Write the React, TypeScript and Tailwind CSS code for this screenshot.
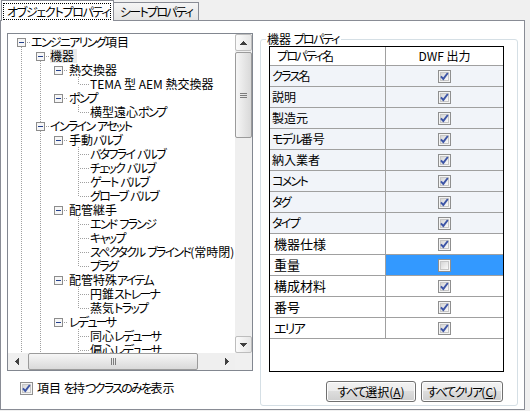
import type { ReactNode } from 'react';

type Kind = 'root' | 'l1' | 'l2' | 'leaf';
type TreeRow = { label: string; kind: Kind; pos?: 'first' | 'mid' | 'last' | 'only'; sel?: boolean };

const TREE: TreeRow[] = [
  { label: 'エンジニアリング項目', kind: 'root' },
  { label: '機器', kind: 'l1', sel: true },
  { label: '熱交換器', kind: 'l2' },
  { label: 'TEMA 型 AEM 熱交換器', kind: 'leaf', pos: 'only' },
  { label: 'ポンプ', kind: 'l2' },
  { label: '横型遠心ポンプ', kind: 'leaf', pos: 'only' },
  { label: 'インライン アセット', kind: 'l1' },
  { label: '手動バルブ', kind: 'l2' },
  { label: 'バタフライ バルブ', kind: 'leaf', pos: 'first' },
  { label: 'チェック バルブ', kind: 'leaf', pos: 'mid' },
  { label: 'ゲート バルブ', kind: 'leaf', pos: 'mid' },
  { label: 'グローブ バルブ', kind: 'leaf', pos: 'last' },
  { label: '配管継手', kind: 'l2' },
  { label: 'エンド フランジ', kind: 'leaf', pos: 'first' },
  { label: 'キャップ', kind: 'leaf', pos: 'mid' },
  { label: 'スペクタクル ブラインド(常時閉)', kind: 'leaf', pos: 'mid' },
  { label: 'プラグ', kind: 'leaf', pos: 'last' },
  { label: '配管特殊アイテム', kind: 'l2' },
  { label: '円錐ストレーナ', kind: 'leaf', pos: 'first' },
  { label: '蒸気トラップ', kind: 'leaf', pos: 'last' },
  { label: 'レデューサ', kind: 'l2' },
  { label: '同心レデューサ', kind: 'leaf', pos: 'first' },
  { label: '偏心レデューサ', kind: 'leaf', pos: 'mid' },
];

// text start (px from the tree's inner left edge)
const INDENT: Record<Kind, number> = { root: 23, l1: 42, l2: 61, leaf: 82 };
const BOX_X: Partial<Record<Kind, number>> = { root: 13.5, l1: 32.5, l2: 50.5 };

const PROPS = [
  { name: 'クラス名', on: true, tint: true },
  { name: '説明', on: true, tint: true },
  { name: '製造元', on: true, tint: true },
  { name: 'モデル番号', on: true, tint: true },
  { name: '納入業者', on: true, tint: true },
  { name: 'コメント', on: true, tint: true },
  { name: 'タグ', on: true, tint: true },
  { name: 'タイプ', on: true, tint: true },
  { name: '機器仕様', on: true, tint: false },
  { name: '重量', on: false, tint: false, sel: true },
  { name: '構成材料', on: true, tint: false },
  { name: '番号', on: true, tint: false },
  { name: 'エリア', on: true, tint: false },
];

const KANA = /([\u3040-\u30ff]+)/;

// kana in the old UI font are much narrower than in Noto, so tighten kana runs only
function J({ t, cls = 'tracking-[-1.7px]' }: { t: string; cls?: string }) {
  return (
    <>
      {t.split(KANA).map((s, i) =>
        i % 2 ? (
          <span key={i} className={cls}>
            {s}
          </span>
        ) : (
          s
        ),
      )}
    </>
  );
}

const DOT = { stroke: '#a0a0a0', strokeDasharray: '1 1' };

function TreeGlyphs({ row, index }: { row: TreeRow; index: number }) {
  const w = INDENT[row.kind];
  const bx = BOX_X[row.kind];
  return (
    <svg width={w} height={14} className="shrink-0" shapeRendering="crispEdges">
      <line x1={13.5} x2={13.5} y1={index === 0 ? 12 : 0} y2={14} {...DOT} />
      {index >= 1 && w > 33 && <line x1={32.5} x2={32.5} y1={index === 1 ? 12 : 0} y2={14} {...DOT} />}
      {row.kind === 'leaf' && (
        <>
          <line
            x1={70.5}
            x2={70.5}
            y1={0}
            y2={row.pos === 'last' || row.pos === 'only' ? 8 : 14}
            {...DOT}
          />
          <line x1={72} x2={81} y1={7.5} y2={7.5} {...DOT} />
        </>
      )}
      {bx !== undefined && (
        <>
          <line x1={bx + 5.5} x2={w - 1} y1={7.5} y2={7.5} {...DOT} />
          <rect x={bx - 4} y={3.5} width={8} height={8} fill="#f6f6f6" stroke="#8d8d8d" />
          <line x1={bx - 2.5} x2={bx + 2.5} y1={7.5} y2={7.5} stroke="#23408c" />
        </>
      )}
    </svg>
  );
}

function Tri({ dir }: { dir: 'up' | 'down' | 'left' | 'right' }) {
  const vertical = dir === 'up' || dir === 'down';
  const cells: [number, number][] = [];
  for (let i = 0; i < 4; i++) for (let j = -i; j <= i; j++) cells.push([i, j]);
  return (
    <svg width={vertical ? 7 : 4} height={vertical ? 4 : 7} shapeRendering="crispEdges">
      {cells.map(([i, j], k) => {
        const x = vertical ? 3 + j : dir === 'left' ? i : 3 - i;
        const y = dir === 'up' ? i : dir === 'down' ? 3 - i : 3 + j;
        return <rect key={k} x={x} y={y} width={1} height={1} fill="#404040" />;
      })}
    </svg>
  );
}

function VScroll() {
  return (
    <div className="flex h-[319px] w-[17px] flex-col bg-[#efefef]">
      <div className="flex h-[17px] w-[17px] items-center justify-center rounded-[2px] border border-[#bdbdbd] bg-gradient-to-r from-[#fbfbfb] to-[#e6e6e6]">
        <Tri dir="up" />
      </div>
      <div className="flex-1">
        <div className="mt-[1px] flex h-[86px] w-[17px] items-center justify-center rounded-[2px] border border-[#9b9b9b] bg-gradient-to-r from-[#f6f6f6] to-[#d9d9d9]">
          <svg width="7" height="5" shapeRendering="crispEdges">
            <rect x="0" y="0" width="7" height="1" fill="#7d7d7d" />
            <rect x="0" y="2" width="7" height="1" fill="#7d7d7d" />
            <rect x="0" y="4" width="7" height="1" fill="#7d7d7d" />
          </svg>
        </div>
      </div>
      <div className="flex h-[17px] w-[17px] items-center justify-center rounded-[2px] border border-[#bdbdbd] bg-gradient-to-r from-[#fbfbfb] to-[#e6e6e6]">
        <Tri dir="down" />
      </div>
    </div>
  );
}

function HScroll() {
  return (
    <div className="flex h-[17px] w-[227px] items-center bg-[#efefef]">
      <div className="flex h-[17px] w-[17px] items-center justify-center">
        <Tri dir="left" />
      </div>
      <div className="flex h-[17px] flex-1 items-center">
        <div className="ml-[3px] flex h-[17px] w-[170px] items-center justify-center rounded-[2px] border border-[#9b9b9b] bg-gradient-to-b from-[#f6f6f6] to-[#d9d9d9]">
          <svg width="5" height="7" shapeRendering="crispEdges">
            <rect x="0" y="0" width="1" height="7" fill="#7d7d7d" />
            <rect x="2" y="0" width="1" height="7" fill="#7d7d7d" />
            <rect x="4" y="0" width="1" height="7" fill="#7d7d7d" />
          </svg>
        </div>
      </div>
      <div className="flex h-[17px] w-[17px] items-center justify-center">
        <Tri dir="right" />
      </div>
    </div>
  );
}

function CheckBox({ checked }: { checked: boolean }) {
  return (
    <span className="flex h-[13px] w-[13px] shrink-0 items-center justify-center border border-[#8f8f8f] bg-[#f4f4f4]">
      <span className="flex h-[9px] w-[9px] items-center justify-center border border-[#c6c6c6] bg-gradient-to-br from-[#d6d6d6] to-[#fafafa]">
        {checked && (
          <svg width="9" height="9" viewBox="0 0 9 9" className="shrink-0 overflow-visible">
            <path d="M0.9 4.3 L3.3 6.9 L7.8 1" fill="none" stroke="#3d55a6" strokeWidth="1.9" />
          </svg>
        )}
      </span>
    </span>
  );
}

function Button({ children, width }: { children: ReactNode; width: string }) {
  return (
    <div
      className={`flex h-[21px] ${width} items-center justify-center whitespace-nowrap rounded-[3px] border border-[#707070] bg-[linear-gradient(to_bottom,#f2f2f2_0%,#ebebeb_50%,#dddddd_50%,#cfcfcf_100%)] shadow-[inset_0_0_0_1px_#fcfcfc]`}
    >
      {children}
    </div>
  );
}

export default function App() {
  return (
    <div className="h-[411px] w-[530px] overflow-hidden bg-[#f0f0f0] font-['Noto_Sans_CJK_JP','Noto_Sans_CJK_SC',sans-serif] text-[12px] leading-[14px] text-black [font-feature-settings:'palt']">
      {/* tabs */}
      <div className="flex h-[20px] items-start">
        <div className="relative z-10 ml-[1px] h-[21px] w-[113px] shrink-0 border border-b-0 border-[#898c95] bg-white pl-[1px] pt-[2px]">
          <div className="flex h-[17px] w-[108px] items-center overflow-hidden whitespace-nowrap border border-dotted border-black pl-[3px]">
            <J t="オブジェクト プロパティ" cls="tracking-[-1.3px]" />
          </div>
        </div>
        <div className="mt-[2px] flex h-[18px] w-[85px] shrink-0 items-center overflow-hidden whitespace-nowrap border-r border-t border-[#898c95] bg-gradient-to-b from-[#f5f5f5] to-[#e4e4e4] pl-[6px]">
          <J t="シート プロパティ" />
        </div>
      </div>

      {/* tab page */}
      <div className="h-[390px] w-[525px] border border-[#898c95] bg-white">
        <div className="flex pl-[6px] pt-[12px]">
          {/* left: class tree */}
          <div className="flex flex-col">
            <div className="flex h-[338px] w-[246px] flex-col border border-[#828790] bg-white">
              <div className="flex h-[319px]">
                <div className="w-[227px] overflow-hidden pt-[1px]">
                  {TREE.map((row, i) => (
                    <div key={i} className="flex h-[14px] items-center">
                      <TreeGlyphs row={row} index={i} />
                      <span className={`whitespace-nowrap ${row.sel ? 'bg-[#ebebeb] pr-[3px]' : ''}`}>
                        <J t={row.label} />
                      </span>
                    </div>
                  ))}
                </div>
                <VScroll />
              </div>
              <div className="flex h-[17px]">
                <HScroll />
                <div className="h-[17px] w-[17px] bg-[#f0f0f0]" />
              </div>
            </div>
            <div className="ml-[13px] mt-[10px] flex items-center gap-[4px]">
              <CheckBox checked />
              <span className="whitespace-nowrap">
                <J t="項目 を持つクラスのみを表示" />
              </span>
            </div>
          </div>

          {/* right: property group */}
          <div className="relative ml-[7px] mt-[6px] h-[367px] w-[258px] rounded-[3px] border border-[#d5dfe5] pl-[8px] pt-[6px]">
            <span className="absolute -top-[8px] left-[5px] whitespace-nowrap bg-white pl-[1px] pr-[2px]">
              <J t="機器 プロパティ" />
            </span>
            <div className="h-[326px] w-[235px] border border-black bg-white">
              <div className="flex h-[19px] border-b border-[#a0a0a0]">
                <div className="flex w-[116px] items-center border-r border-[#a0a0a0] pl-[7px]">
                  <J t="プロパティ名" />
                </div>
                <div className="flex flex-1 items-center justify-center">DWF 出力</div>
              </div>
              {PROPS.map((p) => (
                <div
                  key={p.name}
                  className={`flex h-[21px] border-b border-[#a0a0a0] ${p.tint ? 'bg-[#f1f4f9]' : 'bg-white'}`}
                >
                  <div
                    className={`flex w-[116px] items-center whitespace-nowrap border-r border-[#a0a0a0] ${
                      p.tint ? 'pl-[2px]' : 'pl-[4px] text-[13px]'
                    }`}
                  >
                    <J t={p.name} />
                  </div>
                  <div className={`flex flex-1 items-center justify-center pt-[1px] ${p.sel ? 'bg-[#3399ff]' : ''}`}>
                    <CheckBox checked={p.on} />
                  </div>
                </div>
              ))}
            </div>
            <div className="mt-[9px] flex w-[235px] justify-end gap-[5px] pr-[1px]">
              <Button width="w-[90px]">
                <J t="すべて" />
                選択(<span className="underline">A</span>)
              </Button>
              <Button width="w-[82px]">
                <J t="すべてクリア" />(<span className="underline">C</span>)
              </Button>
            </div>
          </div>
        </div>
      </div>
    </div>
  );
}
